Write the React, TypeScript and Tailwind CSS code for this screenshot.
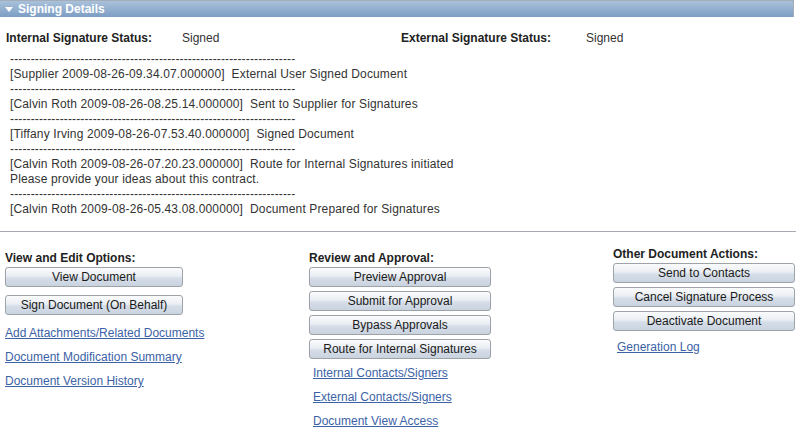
import React from "react";

const DASH = "-".repeat(69);

function Btn({ label, w }: { label: string; w: string }) {
  return (
    <div
      className={`${w} h-[20px] flex items-center justify-center rounded-[3px] border border-[#9ea3a9] bg-[linear-gradient(to_bottom,#fafbfc,#eaeef3_45%,#d6dee8_55%,#c9d3df)] text-[12px] text-[#1a1a1a] leading-none`}
    >
      {label}
    </div>
  );
}

function Lnk({ label }: { label: string }) {
  return <a className="text-[#3b62a6] underline leading-[15px] cursor-pointer">{label}</a>;
}

export default function App() {
  const log = [
    DASH,
    "[Supplier 2009-08-26-09.34.07.000000]  External User Signed Document",
    DASH,
    "[Calvin Roth 2009-08-26-08.25.14.000000]  Sent to Supplier for Signatures",
    DASH,
    "[Tiffany Irving 2009-08-26-07.53.40.000000]  Signed Document",
    DASH,
    "[Calvin Roth 2009-08-26-07.20.23.000000]  Route for Internal Signatures initiated",
    "Please provide your ideas about this contract.",
    DASH,
    "[Calvin Roth 2009-08-26-05.43.08.000000]  Document Prepared for Signatures",
  ];
  return (
    <div className="w-[796px] h-[434px] overflow-hidden bg-white font-['Liberation_Sans',Arial,sans-serif] text-[12px] text-[#333]">
      <div className="w-[794px] h-[17px] flex items-center border-t border-r border-[#a3adb9] bg-[linear-gradient(to_bottom,#a9c1da,#7c9ec4)]">
        <svg width="8" height="5" viewBox="0 0 8 5" className="ml-[5px] mt-[1px]">
          <polygon points="0,0 8,0 4,5" fill="#ffffff" />
        </svg>
        <span className="ml-[5px] text-white font-bold text-[12px] leading-none">Signing Details</span>
      </div>

      <div className="flex pl-[6px] mt-[14px] leading-[15px]">
        <span className="w-[176px] font-bold text-[#222]">Internal Signature Status:</span>
        <span className="w-[219px]">Signed</span>
        <span className="w-[185px] font-bold text-[#222]">External Signature Status:</span>
        <span>Signed</span>
      </div>

      <div className="pl-[10px] mt-[6px] leading-[15px] whitespace-pre tracking-[0.14px]">
        {log.map((l, i) => (
          <div key={i}>{l}</div>
        ))}
      </div>

      <div className="mt-[14px] h-px bg-[#a8a9b6]" />

      <div className="grid grid-cols-[304px_304px_1fr] pl-[5px] items-start">
        <div className="flex flex-col pt-[19px]">
          <div className="font-bold text-[#222] leading-[15px]">View and Edit Options:</div>
          <div className="mt-[1px] flex flex-col gap-[8px]">
            <Btn label="View Document" w="w-[178px]" />
            <Btn label="Sign Document (On Behalf)" w="w-[178px]" />
          </div>
          <div className="mt-[11px] flex flex-col gap-[9px] items-start">
            <Lnk label="Add Attachments/Related Documents" />
            <Lnk label="Document Modification Summary" />
            <Lnk label="Document Version History" />
          </div>
        </div>
        <div className="flex flex-col pt-[19px]">
          <div className="font-bold text-[#222] leading-[15px]">Review and Approval:</div>
          <div className="mt-[1px] flex flex-col gap-[4px]">
            <Btn label="Preview Approval" w="w-[182px]" />
            <Btn label="Submit for Approval" w="w-[182px]" />
            <Btn label="Bypass Approvals" w="w-[182px]" />
            <Btn label="Route for Internal Signatures" w="w-[182px]" />
          </div>
          <div className="mt-[7px] flex flex-col gap-[9px] items-start pl-[4px]">
            <Lnk label="Internal Contacts/Signers" />
            <Lnk label="External Contacts/Signers" />
            <Lnk label="Document View Access" />
          </div>
        </div>
        <div className="flex flex-col pt-[15px]">
          <div className="font-bold text-[#222] leading-[15px]">Other Document Actions:</div>
          <div className="mt-[1px] flex flex-col gap-[4px]">
            <Btn label="Send to Contacts" w="w-[182px]" />
            <Btn label="Cancel Signature Process" w="w-[182px]" />
            <Btn label="Deactivate Document" w="w-[182px]" />
          </div>
          <div className="mt-[9px] flex flex-col items-start pl-[4px]">
            <Lnk label="Generation Log" />
          </div>
        </div>
      </div>
    </div>
  );
}
